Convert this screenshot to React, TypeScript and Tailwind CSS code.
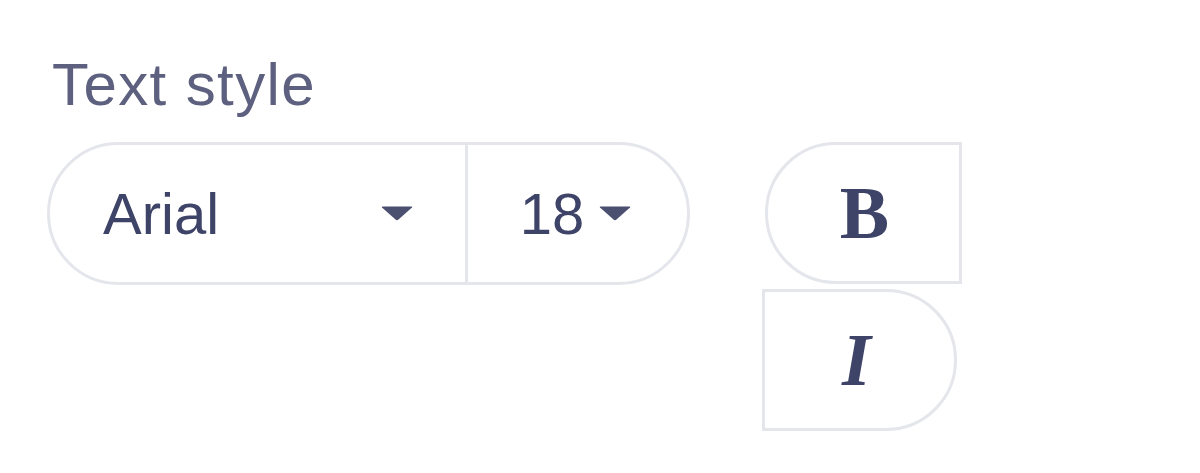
import React from "react";

function Caret() {
  return (
    <svg width="32" height="15" viewBox="0 0 32 15" className="shrink-0">
      <path d="M1 1.5 Q0 0.5 2 0.5 L30 0.5 Q32 0.5 31 1.5 L17.5 13.5 Q16 14.8 14.5 13.5 Z" fill="#4b4f70" />
    </svg>
  );
}

export default function App() {
  return (
    <div className="w-[1200px] h-[473px] bg-white overflow-hidden" style={{ fontFamily: '"Liberation Sans", Arial, sans-serif' }}>
      <div className="pl-[47px] pt-[55px] flex flex-col">
        <div className="pl-[5px] text-[60px] leading-[60px] tracking-[1.4px] text-[#5d607e]">Text style</div>
        <div className="mt-[27px] flex items-start">
          <div className="flex h-[143px] w-[643px] rounded-full border-[3px] border-[#e4e6ec] text-[#3e4368]">
            <div className="flex w-[418px] items-center justify-between pl-[53px] pr-[52px] border-r-[3px] border-[#e4e6ec]">
              <span className="text-[58px] leading-none">Arial</span>
              <Caret />
            </div>
            <div className="flex flex-1 items-center justify-center gap-[15px] pr-[4px]">
              <span className="text-[58px] leading-none">18</span>
              <Caret />
            </div>
          </div>
          <div className="ml-[72px] flex flex-col items-start gap-[5px]">
            <button
              className="ml-[3px] flex h-[142px] w-[197px] items-center justify-center rounded-l-full border-[3px] border-[#e4e6ec] bg-white pl-[2px] text-[#3e4368]"
              style={{ fontFamily: '"Liberation Serif", "Times New Roman", serif' }}
            >
              <span className="text-[74px] font-bold leading-none">B</span>
            </button>
            <button
              className="flex h-[142px] w-[195px] items-center justify-center rounded-r-full border-[3px] border-[#e4e6ec] bg-white pr-[6px] text-[#3e4368]"
              style={{ fontFamily: '"Liberation Serif", "Times New Roman", serif' }}
            >
              <span className="text-[74px] font-bold italic leading-none">I</span>
            </button>
          </div>
        </div>
      </div>
    </div>
  );
}
